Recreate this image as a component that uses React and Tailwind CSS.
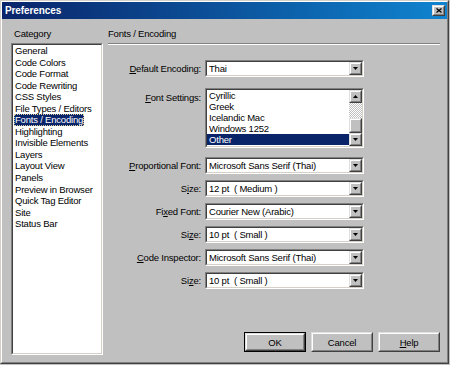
import React from "react";

const categories = [
  "General",
  "Code Colors",
  "Code Format",
  "Code Rewriting",
  "CSS Styles",
  "File Types / Editors",
  "Fonts / Encoding",
  "Highlighting",
  "Invisible Elements",
  "Layers",
  "Layout View",
  "Panels",
  "Preview in Browser",
  "Quick Tag Editor",
  "Site",
  "Status Bar",
];

const encodings = ["Cyrillic", "Greek", "Icelandic Mac", "Windows 1252", "Other"];

const Sunken = ({ className = "", inner = "", children }) => (
  <div className={`border border-t-[#808080] border-l-[#808080] border-r-white border-b-white ${className}`}>
    <div className={`h-full border border-t-[#404040] border-l-[#404040] border-r-[#d4d0c8] border-b-[#d4d0c8] bg-white ${inner}`}>
      {children}
    </div>
  </div>
);

const Raised = ({ className = "", children }) => (
  <div className={`border border-t-[#dfdfdf] border-l-[#dfdfdf] border-r-[#404040] border-b-[#404040] bg-[#c0c0c0] ${className}`}>
    <div className="h-full w-full border border-t-white border-l-white border-r-[#808080] border-b-[#808080] flex items-center justify-center">
      {children}
    </div>
  </div>
);

const Down = () => (
  <svg width="5" height="3" viewBox="0 0 5 3">
    <path d="M0 0h5L2.5 3z" fill="#000" />
  </svg>
);

const Up = () => (
  <svg width="5" height="3" viewBox="0 0 5 3">
    <path d="M0 3h5L2.5 0z" fill="#000" />
  </svg>
);

const Combo = ({ value }) => (
  <Sunken className="w-[159px] h-[17px]" inner="flex">
    <span className="flex-1 pl-[2px] leading-[13px] whitespace-pre overflow-hidden">{value}</span>
    <Raised className="w-[13px] h-full">
      <Down />
    </Raised>
  </Sunken>
);

const Row = ({ label, className = "", top, children }) => (
  <div className={`flex ${top ? "items-start" : "items-center"} ${className}`}>
    <div className={`w-[97px] pr-[4px] text-right whitespace-nowrap ${top ? "pt-[4px]" : ""}`}>{label}</div>
    {children}
  </div>
);

const Btn = ({ children, isDefault }) => (
  <div className={`w-[62px] h-[20px] ${isDefault ? "border border-black" : ""}`}>
    <Raised className="w-full h-full">
      <span>{children}</span>
    </Raised>
  </div>
);

export default function App() {
  return (
    <div className="w-[450px] h-[365px] bg-[#c0c0c0] text-black text-[9.5px] tracking-[-0.2px] leading-[11px] font-['Liberation_Sans',Arial,sans-serif]">
      <div className="w-[449px] h-[364px] border border-t-[#d4d0c8] border-l-[#d4d0c8] border-r-[#404040] border-b-[#404040]">
        <div className="h-full border border-t-white border-l-white border-r-[#808080] border-b-[#808080] flex flex-col">
          {/* title bar */}
          <div className="h-[17px] bg-linear-to-r from-[#0a246a] to-[#1084d0] flex items-center justify-between pl-[3px] pr-[2px]">
            <span className="text-white font-bold text-[10px] tracking-[-0.1px]">Preferences</span>
            <Raised className="w-[13px] h-[11px]">
              <svg width="6" height="5" viewBox="0 0 6 5">
                <path d="M0.5 0.5L5.5 4.5M5.5 0.5L0.5 4.5" stroke="#000" strokeWidth="1.3" />
              </svg>
            </Raised>
          </div>

          <div className="flex pl-[9px] pt-[9px] gap-[5px]">
            {/* category column */}
            <div className="w-[92px] flex flex-col">
              <div className="pl-[3px]">Category</div>
              <Sunken className="mt-[4px] h-[312px]" inner="flex flex-col items-start">
                {categories.map((c) => (
                  <div
                    key={c}
                    className={`h-[11.55px] leading-[11.55px] ml-[1px] px-[1px] whitespace-nowrap ${
                      c === "Fonts / Encoding"
                        ? "bg-[#0a246a] text-white outline-1 outline-dotted outline-[#d8d0a0] -outline-offset-1"
                        : ""
                    }`}
                  >
                    {c}
                  </div>
                ))}
              </Sunken>
            </div>

            {/* settings column */}
            <div className="w-[332px] flex flex-col">
              <div>Fonts / Encoding</div>
              <div className="mt-[4px] border-t border-t-[#808080] border-b border-b-white" />

              <Row className="mt-[15px]" label={<><u>D</u>efault Encoding:</>}>
                <Combo value="Thai" />
              </Row>

              <Row top className="mt-[11px]" label={<><u>F</u>ont Settings:</>}>
                <Sunken className="w-[159px] h-[60px]" inner="flex overflow-hidden">
                  <div className="flex-1 flex flex-col">
                    {encodings.map((e) => (
                      <div
                        key={e}
                        className={`shrink-0 h-[11px] leading-[11px] pl-[2px] whitespace-nowrap ${
                          e === "Other" ? "bg-[#0a246a] text-white" : ""
                        }`}
                      >
                        {e}
                      </div>
                    ))}
                  </div>
                  <div className="w-[13px] flex flex-col">
                    <Raised className="h-[13px]">
                      <Up />
                    </Raised>
                    <div className="flex-1 bg-[repeating-conic-gradient(#c0c0c0_0_25%,#ffffff_0_50%)] bg-[length:2px_2px]" />
                    <Raised className="h-[15px]" />
                    <Raised className="h-[13px]">
                      <Down />
                    </Raised>
                  </div>
                </Sunken>
              </Row>

              <Row className="mt-[9px]" label={<><u>P</u>roportional Font:</>}>
                <Combo value="Microsoft Sans Serif (Thai)" />
              </Row>
              <Row className="mt-[6px]" label={<>S<u>i</u>ze:</>}>
                <Combo value="12 pt  ( Medium )" />
              </Row>
              <Row className="mt-[6px]" label={<>Fi<u>x</u>ed Font:</>}>
                <Combo value="Courier New (Arabic)" />
              </Row>
              <Row className="mt-[6px]" label={<>Si<u>z</u>e:</>}>
                <Combo value="10 pt  ( Small )" />
              </Row>
              <Row className="mt-[6px]" label={<><u>C</u>ode Inspector:</>}>
                <Combo value="Microsoft Sans Serif (Thai)" />
              </Row>
              <Row className="mt-[6px]" label={<>Si<u>z</u>e:</>}>
                <Combo value="10 pt  ( Small )" />
              </Row>

              <div className="mt-[43px] flex justify-end gap-[5px]">
                <Btn isDefault>OK</Btn>
                <Btn>Cancel</Btn>
                <Btn>
                  <u>H</u>elp
                </Btn>
              </div>
            </div>
          </div>
        </div>
      </div>
    </div>
  );
}
